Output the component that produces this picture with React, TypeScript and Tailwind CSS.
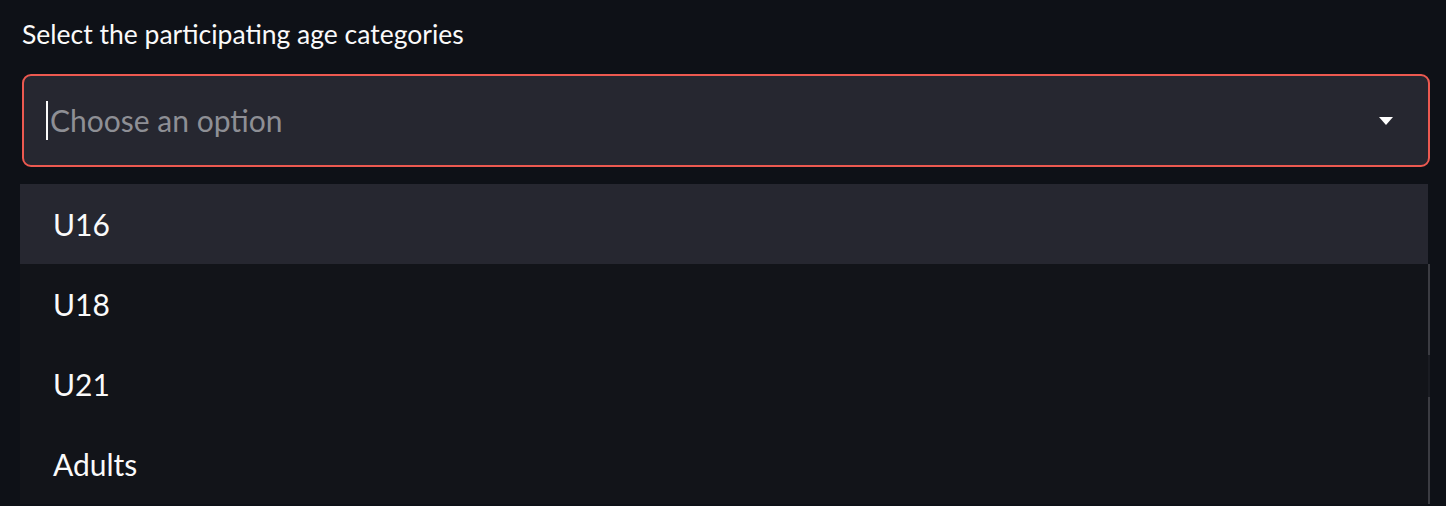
const OPTIONS = ["U16", "U18", "U21", "Adults"];

export default function App() {
  return (
    <div
      className="h-[506px] w-[1446px] overflow-hidden bg-[#0e1117] text-[#fafafa]"
      style={{ fontFamily: "Lato, 'Noto Sans', sans-serif" }}
    >
      <div className="pl-[22px] pr-[16px] pt-[17px]">
        <p className="h-[34px] text-[26.5px] leading-[34px]">Select the participating age categories</p>

        <div className="mt-[23px] flex h-[93px] w-[1408px] items-center rounded-[9px] border-2 border-[#ec5950] bg-[#262730] pl-[22px] pr-[34px]">
          <span className="h-[39px] w-[2px] bg-[#fafafa]" />
          <span className="ml-[2px] flex-1 text-[30px] text-[#8e8f95]">Choose an option</span>
          <svg width="16" height="10" viewBox="0 0 16 10" className="text-white">
            <path d="M1 1h14L8 9z" fill="currentColor" />
          </svg>
        </div>
      </div>

      <div className="ml-[20px] mt-[17px] flex w-[1410px]">
        <ul className="flex-1 bg-[#121419]">
          {OPTIONS.map((o, i) => (
            <li
              key={o}
              className={
                "flex h-[80px] items-center pl-[33px] text-[30px] " +
                (i === 0 ? "bg-[#262730]" : "")
              }
            >
              {o}
            </li>
          ))}
        </ul>
        <div className="flex w-[2px] flex-col">
          <div className="h-[80px]" />
          <div className="h-[91px] bg-[#3b3c42]" />
          <div className="h-[42px] bg-[#1a1c22]" />
          <div className="flex-1 bg-[#3b3c42]" />
        </div>
      </div>
    </div>
  );
}
